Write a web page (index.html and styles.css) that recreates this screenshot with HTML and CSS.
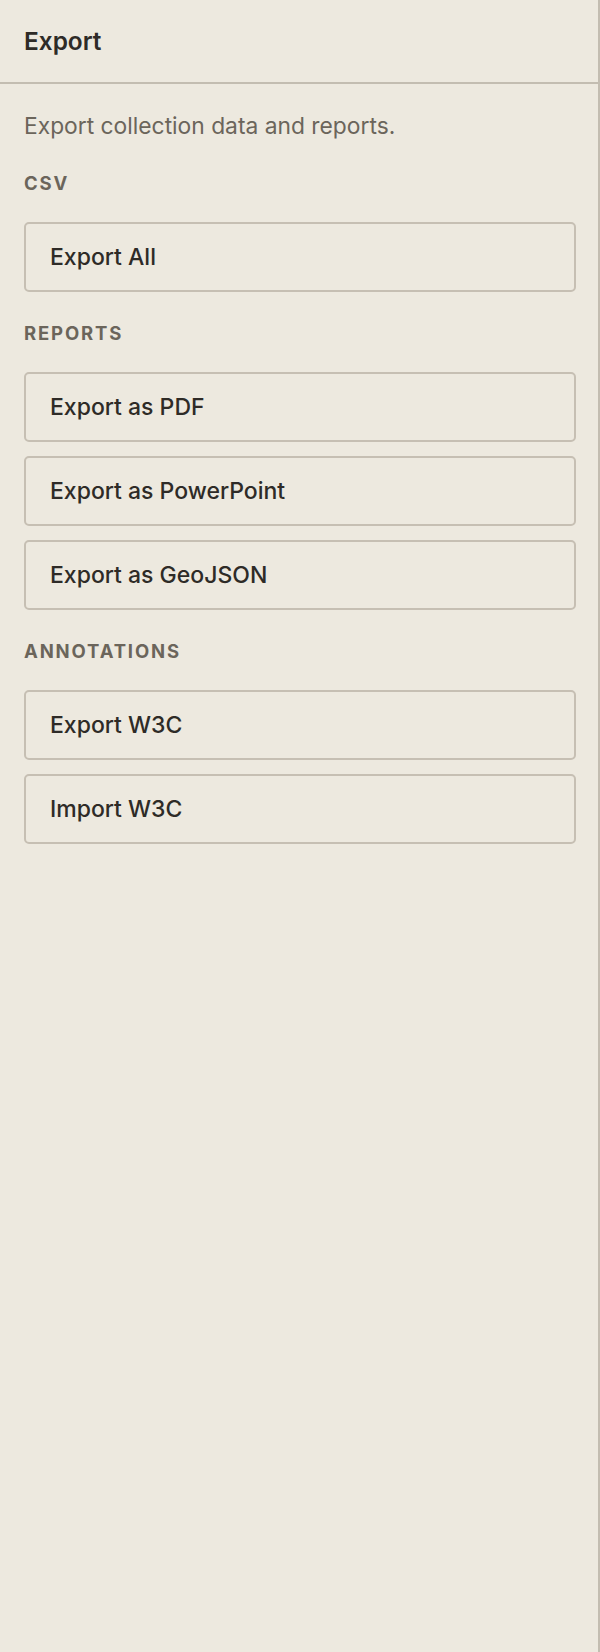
FILE: index.html
```html
<!DOCTYPE html>
<html lang="en">
<head>
<meta charset="utf-8">
<title>Export</title>
<link rel="stylesheet" href="styles.css">
</head>
<body>
<aside class="panel">
  <header class="panel-header">
    <h1 class="panel-title">Export</h1>
  </header>
  <div class="panel-body">
    <p class="panel-desc">Export collection data and reports.</p>
    <section class="group">
      <h2 class="group-label">CSV</h2>
      <div class="group-actions">
        <button class="action" type="button">Export All</button>
      </div>
    </section>
    <section class="group">
      <h2 class="group-label">Reports</h2>
      <div class="group-actions">
        <button class="action" type="button">Export as PDF</button>
        <button class="action" type="button">Export as PowerPoint</button>
        <button class="action" type="button">Export as GeoJSON</button>
      </div>
    </section>
    <section class="group">
      <h2 class="group-label">Annotations</h2>
      <div class="group-actions">
        <button class="action" type="button">Export W3C</button>
        <button class="action" type="button">Import W3C</button>
      </div>
    </section>
  </div>
</aside>
</body>
</html>
```
FILE: styles.css
```css
* {
  box-sizing: border-box;
}

html, body {
  margin: 0;
  padding: 0;
  background: #ede9df;
}

body {
  font-family: Inter, "Liberation Sans", sans-serif;
  color: #2e2b27;
}

.panel {
  width: 600px;
  min-height: 1652px;
  background: #ede9df;
  border-right: 2px solid #c3bdb1;
}

.panel-header {
  padding: 24px 24px;
  border-bottom: 2px solid #c3bdb1;
}

.panel-title {
  margin: 0;
  font-size: 24.4px;
  line-height: 34px;
  font-weight: 600;
  color: #2e2b27;
}

.panel-body {
  padding: 24px 22px 24px 24px;
  display: flex;
  flex-direction: column;
}

.panel-desc {
  margin: 0 0 25px;
  font-size: 22.8px;
  line-height: 36px;
  color: #6b655b;
}

.group {
  display: flex;
  flex-direction: column;
  margin-bottom: 26.3px;
}

.group-label {
  margin: 0 0 25.3px;
  font-size: 18.5px;
  line-height: 28px;
  font-weight: 700;
  letter-spacing: 0.1em;
  text-transform: uppercase;
  color: #6b655b;
}

.group-actions {
  display: flex;
  flex-direction: column;
  gap: 14.3px;
}

.action {
  display: flex;
  align-items: center;
  height: 70px;
  padding: 0 24px;
  margin: 0;
  background: transparent;
  border: 2px solid #c6bfb3;
  border-radius: 5px;
  font-family: inherit;
  font-size: 23px;
  font-weight: 500;
  color: #2e2b27;
  text-align: left;
  cursor: pointer;
}
```
